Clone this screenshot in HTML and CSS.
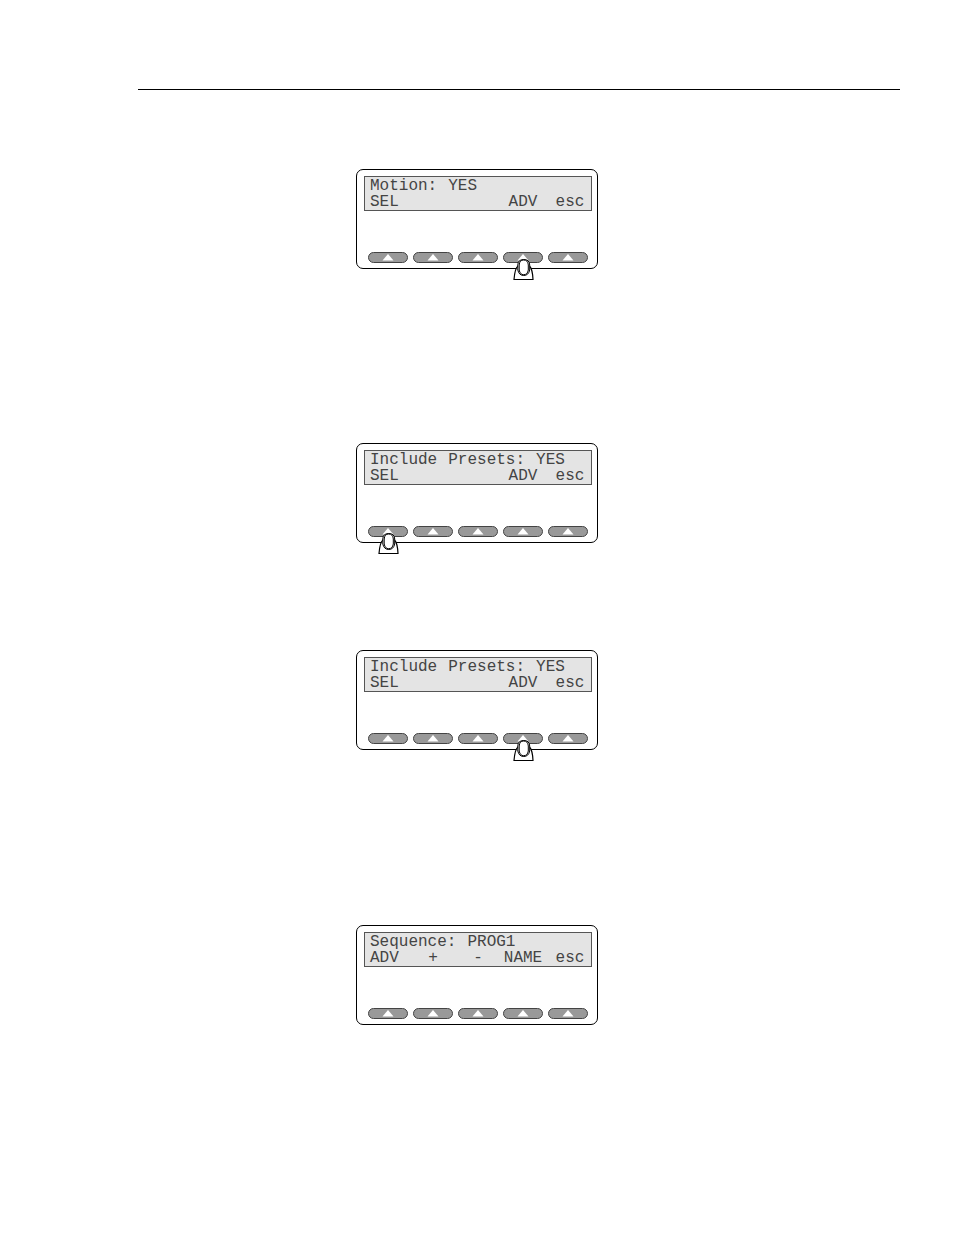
FILE: index.html
```
<!DOCTYPE html>
<html lang="en">
<head>
    <meta charset="UTF-8">
    <title>Sequence setup</title>
    <link rel="stylesheet" href="styles.css">
</head>
<body>
    <!-- shared drawings: key arrow and pressing thumb -->
    <svg class="defs" aria-hidden="true">
        <symbol id="arrow" viewBox="0 0 12 7">
            <path d="M6 0 L11.5 6.500 H0.500 Z" fill="#fff"/>
        </symbol>
        <symbol id="thumb" viewBox="0 0 21 23">
            <path d="M5 8 Q2 10 1 21.500 H20 Q19.500 11 16.500 8 Z" fill="#fff" stroke="#000" stroke-width="1.200"/>
            <path d="M4.800 7 Q5 1.500 10.700 1.500 Q16.500 1.500 16.700 7 V12 Q15.500 17.500 10.700 17.500 Q6 17.500 4.800 12 Z" fill="#fff" stroke="#000" stroke-width="1"/>
            <path d="M6.200 7 Q6.500 2 10.700 2 Q15 2 15.300 7 V12 Q14.500 16.700 10.700 16.700 Q7 16.700 6.200 12 Z" fill="#fff" stroke="#000" stroke-width="1"/>
        </symbol>
    </svg>

    <hr class="rule">

    <main class="steps">
        <section class="panel step-motion">
            <div class="screen">
                <div class="line"><span>Motion:</span> <span>YES</span></div>
                <div class="labels"><span>SEL</span><span></span><span></span><span>ADV</span><span>esc</span></div>
            </div>
            <div class="keys">
                <button class="key" aria-label="SEL"><svg class="arrow"><use href="#arrow"/></svg></button>
                <button class="key" aria-label="Key 2"><svg class="arrow"><use href="#arrow"/></svg></button>
                <button class="key" aria-label="Key 3"><svg class="arrow"><use href="#arrow"/></svg></button>
                <button class="key" aria-label="ADV"><svg class="arrow"><use href="#arrow"/></svg><svg class="thumb"><use href="#thumb"/></svg></button>
                <button class="key" aria-label="esc"><svg class="arrow"><use href="#arrow"/></svg></button>
            </div>
        </section>

        <section class="panel step-include">
            <div class="screen">
                <div class="line"><span>Include</span> <span>Presets:</span> <span>YES</span></div>
                <div class="labels"><span>SEL</span><span></span><span></span><span>ADV</span><span>esc</span></div>
            </div>
            <div class="keys">
                <button class="key" aria-label="SEL"><svg class="arrow"><use href="#arrow"/></svg><svg class="thumb"><use href="#thumb"/></svg></button>
                <button class="key" aria-label="Key 2"><svg class="arrow"><use href="#arrow"/></svg></button>
                <button class="key" aria-label="Key 3"><svg class="arrow"><use href="#arrow"/></svg></button>
                <button class="key" aria-label="ADV"><svg class="arrow"><use href="#arrow"/></svg></button>
                <button class="key" aria-label="esc"><svg class="arrow"><use href="#arrow"/></svg></button>
            </div>
        </section>

        <section class="panel step-advance">
            <div class="screen">
                <div class="line"><span>Include</span> <span>Presets:</span> <span>YES</span></div>
                <div class="labels"><span>SEL</span><span></span><span></span><span>ADV</span><span>esc</span></div>
            </div>
            <div class="keys">
                <button class="key" aria-label="SEL"><svg class="arrow"><use href="#arrow"/></svg></button>
                <button class="key" aria-label="Key 2"><svg class="arrow"><use href="#arrow"/></svg></button>
                <button class="key" aria-label="Key 3"><svg class="arrow"><use href="#arrow"/></svg></button>
                <button class="key" aria-label="ADV"><svg class="arrow"><use href="#arrow"/></svg><svg class="thumb"><use href="#thumb"/></svg></button>
                <button class="key" aria-label="esc"><svg class="arrow"><use href="#arrow"/></svg></button>
            </div>
        </section>

        <section class="panel step-sequence">
            <div class="screen">
                <div class="line"><span>Sequence:</span> <span>PROG1</span></div>
                <div class="labels"><span>ADV</span><span>+</span><span>-</span><span>NAME</span><span>esc</span></div>
            </div>
            <div class="keys">
                <button class="key" aria-label="ADV"><svg class="arrow"><use href="#arrow"/></svg></button>
                <button class="key" aria-label="+"><svg class="arrow"><use href="#arrow"/></svg></button>
                <button class="key" aria-label="-"><svg class="arrow"><use href="#arrow"/></svg></button>
                <button class="key" aria-label="NAME"><svg class="arrow"><use href="#arrow"/></svg></button>
                <button class="key" aria-label="esc"><svg class="arrow"><use href="#arrow"/></svg></button>
            </div>
        </section>
    </main>
</body>
</html>
```
FILE: styles.css
```
* {
    box-sizing: border-box;
}
body {
    margin: 0;
    padding: 89px 54px 210px 138px;
    background: #fff;
    font-family: "Liberation Mono", monospace;
}
.defs {
    position: absolute;
    width: 0;
    height: 0;
}
.rule {
    margin: 0;
    border: 0;
    border-top: 1px solid #000;
}
.steps {
    display: flex;
    flex-direction: column;
    padding: 79px 0 0 218px;
}

/* front panel: display on top, five soft keys below */
.panel {
    width: 100%;
    max-width: 242px;
    padding: 6px 5px 5px 7px;
    border: 1px solid #000;
    border-radius: 7px;
}
.step-include {
    margin-top: 174px;
}
.step-advance {
    margin-top: 107px;
}
.step-sequence {
    margin-top: 175px;
}
.screen {
    height: 35px;
    padding: 1px 0 0 5px;
    border: 1px solid #555;
    background: #e4e4e4;
    color: #444;
    font-size: 16px;
    line-height: 16px;
}
.line {
    display: flex;
    gap: 11px;
}
.labels {
    display: grid;
    grid-template-columns: 38px 40px 40px 40px 44px;
    column-gap: 5px;
}
.labels span {
    display: flex;
    justify-content: center;
}
.labels span:first-child {
    justify-content: flex-start;
}

/* soft keys */
.keys {
    display: flex;
    gap: 5px;
    margin-top: 41px;
    padding-left: 4px;
}
.key {
    position: relative;
    display: flex;
    justify-content: center;
    align-items: center;
    width: 40px;
    height: 11px;
    padding: 0;
    border: 1px solid #444;
    border-radius: 6px;
    background: #999;
}
.arrow {
    width: 12px;
    height: 7px;
}
.thumb {
    position: absolute;
    top: 5px;
    left: 9px;
    width: 21px;
    height: 23px;
}
```
